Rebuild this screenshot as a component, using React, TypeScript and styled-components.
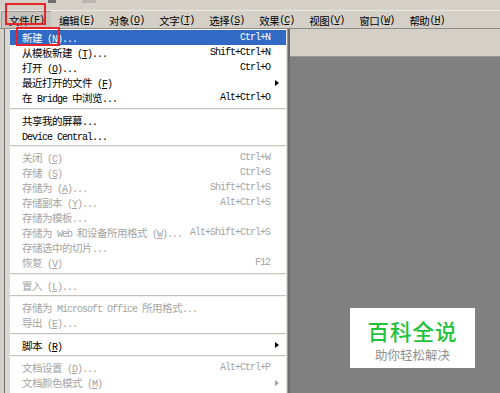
import * as React from 'react'
import styled, { createGlobalStyle } from 'styled-components'

const GlobalStyle = createGlobalStyle`
  html, body {
    margin: 0;
    padding: 0;
    background: #808080;
    overflow: hidden;
  }
`

const Screen = styled.div`
  position: relative;
  width: 500px;
  height: 393px;
  overflow: hidden;
  background: #808080;
  font-family: "Noto Sans CJK SC", "Liberation Sans", sans-serif;
  font-size: 10.5px;
  letter-spacing: -0.5px;
  display: flex;
  flex-direction: column;
`

const TopStrip = styled.div`
  height: 10px;
  background: #d4d0c8;
  display: flex;
  align-items: flex-start;
  gap: 26px;
  padding-left: 48px;
  border-bottom: 1px solid #ece9e3;
`

const ToolStub = styled.div<{ $shade: string; $w: number }>`
  width: ${p => p.$w}px;
  height: 3px;
  background: ${p => p.$shade};
`

const MenuBar = styled.div`
  height: 17px;
  background: #d4d0c8;
  display: flex;
  align-items: center;
  padding-left: 2px;
  border-bottom: 1px solid #8f8c86;
`

const BarItem = styled.div<{ $active?: boolean }>`
  height: 17px;
  display: flex;
  align-items: center;
  padding: 0 7px;
  box-sizing: border-box;
  color: #000;
  background: ${p => (p.$active ? '#c6c3bc' : 'transparent')};
  border-top: 1px solid ${p => (p.$active ? '#9e9b94' : 'transparent')};
  border-left: 1px solid ${p => (p.$active ? '#9e9b94' : 'transparent')};
  margin-left: ${p => (p.$active ? '-1px' : '0')};
`

const Body = styled.div`
  flex: 1;
  display: flex;
  min-height: 0;
`

const LeftRail = styled.div`
  width: 4px;
  background: #d4d0c8;
  border-right: 1px solid #6f6f6f;
`

const Dropdown = styled.div`
  width: 276px;
  background: #fff;
  border-left: 5px solid #dcd9d3;
  border-right: 1px solid #e6e4df;
  box-shadow: 1px 0 0 #9c9a96, 3px 0 0 #6b6b6b;
  padding-top: 1px;
  display: flex;
  flex-direction: column;
`

const Row = styled.div<{ $hot?: boolean; $off?: boolean }>`
  height: 15px;
  display: flex;
  align-items: center;
  padding-left: 12px;
  padding-right: 2px;
  background: ${p => (p.$hot ? '#316ac5' : 'transparent')};
  color: ${p => (p.$hot ? '#fff' : p.$off ? '#a4a4a4' : '#000')};
  white-space: nowrap;
`

const Label = styled.div`
  flex: 1;
`

const Shortcut = styled.div`
  font-family: "Liberation Mono", monospace;
  font-size: 10px;
  letter-spacing: -1px;
`

const ArrowCell = styled.div`
  width: 14px;
  display: flex;
  justify-content: center;
`

const Arrow = styled.div<{ $off?: boolean }>`
  width: 0;
  height: 0;
  border-top: 3.5px solid transparent;
  border-bottom: 3.5px solid transparent;
  border-left: 4px solid ${p => (p.$off ? '#a4a4a4' : '#000')};
`

const Separator = styled.div`
  height: 7.5px;
  display: flex;
  align-items: center;
  &::after {
    content: '';
    flex: 1;
    border-top: 1px solid #c6c2ba;
    border-bottom: 1px solid #f4f3f0;
  }
`

const Workspace = styled.div`
  flex: 1;
  margin-left: 3px;
  display: flex;
  flex-direction: column;
`

const WorkTop = styled.div`
  height: 27px;
  background: #d4d0c8;
  border-bottom: 1px solid #9a9893;
`

const WorkArea = styled.div`
  flex: 1;
  background: #808080;
`

const Lat = styled.span<{ $u?: boolean }>`
  font-family: "Liberation Mono", monospace;
  font-size: 10px;
  letter-spacing: -1px;
  text-decoration: ${p => (p.$u ? 'underline' : 'none')};
`

const Callout = styled.div`
  position: absolute;
  border: 2px solid #e8242b;
  box-sizing: border-box;
  pointer-events: none;
`

const Badge = styled.div`
  position: absolute;
  left: 350px;
  top: 308px;
  width: 125px;
  height: 60px;
  box-sizing: border-box;
  padding-top: 6px;
  background: #fff;
  display: flex;
  flex-direction: column;
  align-items: center;
  justify-content: center;
  letter-spacing: normal;
`

const BadgeTitle = styled.div`
  font-family: "Noto Sans CJK SC", sans-serif;
  font-size: 21.5px;
  line-height: 28px;
  font-weight: 500;
  color: #1fc23a;
  letter-spacing: 1px;
`

const BadgeSub = styled.div`
  font-family: "Noto Sans CJK SC", sans-serif;
  font-size: 12.5px;
  line-height: 20px;
  color: #8e8e8e;
`

// split a label into CJK and latin runs; the letter in "(X)" is a mnemonic
const Txt = ({ s }: { s: string }) => {
  const parts = s.split(/([\x20-\x7e]+)/).filter(Boolean)
  return (
    <>
      {parts.map((part, i) => {
        if (!/^[\x20-\x7e]+$/.test(part)) return <span key={i}>{part}</span>
        const m = part.match(/^(.*\()([A-Z])(\).*)$/)
        if (m)
          return (
            <Lat key={i}>
              {m[1]}
              <Lat $u>{m[2]}</Lat>
              {m[3]}
            </Lat>
          )
        return <Lat key={i}>{part}</Lat>
      })}
    </>
  )
}

type Entry =
  | { sep: true }
  | { sep?: false; label: string; key?: string; sub?: boolean; off?: boolean; hot?: boolean }

const entries: Entry[] = [
  { label: '新建 (N)...', key: 'Ctrl+N', hot: true },
  { label: '从模板新建 (T)...', key: 'Shift+Ctrl+N' },
  { label: '打开 (O)...', key: 'Ctrl+O' },
  { label: '最近打开的文件 (F)', sub: true },
  { label: '在 Bridge 中浏览...', key: 'Alt+Ctrl+O' },
  { sep: true },
  { label: '共享我的屏幕...' },
  { label: 'Device Central...' },
  { sep: true },
  { label: '关闭 (C)', key: 'Ctrl+W', off: true },
  { label: '存储 (S)', key: 'Ctrl+S', off: true },
  { label: '存储为 (A)...', key: 'Shift+Ctrl+S', off: true },
  { label: '存储副本 (Y)...', key: 'Alt+Ctrl+S', off: true },
  { label: '存储为模板...', off: true },
  { label: '存储为 Web 和设备所用格式 (W)...', key: 'Alt+Shift+Ctrl+S', off: true },
  { label: '存储选中的切片...', off: true },
  { label: '恢复 (V)', key: 'F12', off: true },
  { sep: true },
  { label: '置入 (L)...', off: true },
  { sep: true },
  { label: '存储为 Microsoft Office 所用格式...', off: true },
  { label: '导出 (E)...', off: true },
  { sep: true },
  { label: '脚本 (R)', sub: true },
  { sep: true },
  { label: '文档设置 (D)...', key: 'Alt+Ctrl+P', off: true },
  { label: '文档颜色模式 (M)', sub: true, off: true },
]

const menus = ['文件(F)', '编辑(E)', '对象(O)', '文字(T)', '选择(S)', '效果(C)', '视图(V)', '窗口(W)', '帮助(H)']

const App = () => {
  return (
    <Screen>
      <GlobalStyle />
      <TopStrip>
        <ToolStub $shade="#6e6c68" $w={8} />
        <ToolStub $shade="#b9b6b0" $w={14} />
      </TopStrip>
      <MenuBar>
        {menus.map((m, i) => (
          <BarItem key={m} $active={i === 0}>
            <Txt s={m} />
          </BarItem>
        ))}
      </MenuBar>
      <Body>
        <LeftRail />
        <Dropdown>
          {entries.map((e, i) =>
            e.sep ? (
              <Separator key={i} />
            ) : (
              <Row key={i} $hot={e.hot} $off={e.off}>
                <Label>
                  <Txt s={e.label} />
                </Label>
                {e.key && <Shortcut>{e.key}</Shortcut>}
                <ArrowCell>{e.sub && <Arrow $off={e.off} />}</ArrowCell>
              </Row>
            )
          )}
        </Dropdown>
        <Workspace>
          <WorkTop />
          <WorkArea />
        </Workspace>
      </Body>
      <Callout style={{ left: 5, top: 3, width: 41, height: 22 }} />
      <Callout style={{ left: 16, top: 27, width: 44, height: 19 }} />
      <Badge>
        <BadgeTitle>百科全说</BadgeTitle>
        <BadgeSub>助你轻松解决</BadgeSub>
      </Badge>
    </Screen>
  )
}

export default App
